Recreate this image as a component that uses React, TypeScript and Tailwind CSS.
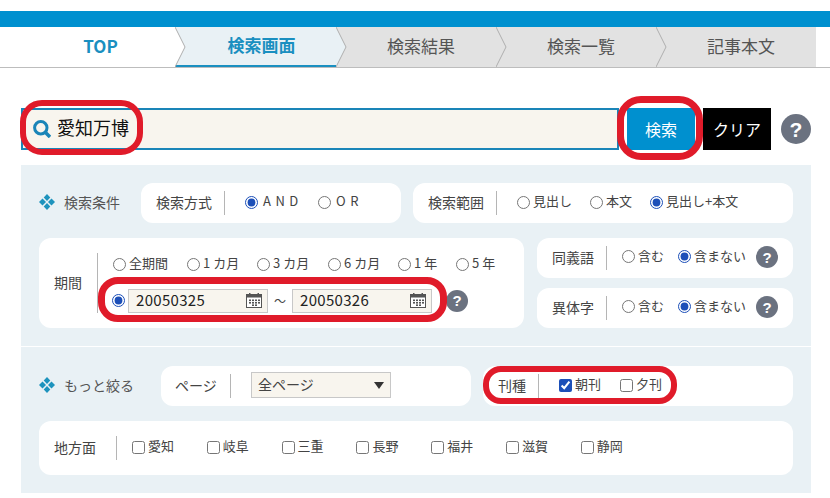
import React from "react";

const Help = ({ size = "w-[22px] h-[22px] text-[15px]" }: { size?: string }) => (
  <span className={`${size} rounded-full bg-[#6b7280] text-white font-bold flex items-center justify-center shrink-0 font-['Liberation_Sans',sans-serif] leading-none`}>?</span>
);

const Diamonds = () => (
  <svg width="16" height="16" viewBox="0 0 16 16" className="shrink-0 mb-[2px]">
    <g fill="#1d93bd">
      <polygon points="8,0 11.3,3.5 8,7 4.7,3.5" />
      <polygon points="8,9 11.3,12.5 8,16 4.7,12.5" />
      <polygon points="3.5,4.5 7,8 3.5,11.5 0,8" />
      <polygon points="12.5,4.5 16,8 12.5,11.5 9,8" />
    </g>
  </svg>
);

const Calendar = () => (
  <svg width="16" height="15" viewBox="0 0 16 15" className="shrink-0">
    <rect x="0.5" y="1.5" width="15" height="13" fill="#fff" stroke="#555" />
    <rect x="0.5" y="1.5" width="15" height="3" fill="#555" />
    <rect x="3" y="0" width="1.5" height="3" fill="#555" />
    <rect x="11.5" y="0" width="1.5" height="3" fill="#555" />
    <g fill="#555">
      <rect x="3" y="6.5" width="2" height="1.6" />
      <rect x="6" y="6.5" width="2" height="1.6" />
      <rect x="9" y="6.5" width="2" height="1.6" />
      <rect x="12" y="6.5" width="2" height="1.6" />
      <rect x="3" y="9" width="2" height="1.6" />
      <rect x="6" y="9" width="2" height="1.6" />
      <rect x="9" y="9" width="2" height="1.6" />
      <rect x="12" y="9" width="2" height="1.6" />
      <rect x="6" y="11.4" width="2" height="1.6" />
      <rect x="9" y="11.4" width="2" height="1.6" />
    </g>
  </svg>
);

const Arrow = ({ fill }: { fill: string }) => (
  <svg width="11" height="40" viewBox="0 0 11 40" className="absolute left-full top-0 z-10">
    <polygon points="0,0 10,20 0,40" fill={fill} />
    <polyline points="0,0 10,20 0,40" fill="none" stroke="#aeaeae" strokeWidth="1" />
  </svg>
);

const Tab = ({ w, label, cls, arrow }: { w: string; label: string; cls: string; arrow?: string }) => (
  <div className={`relative ${w} h-full flex items-center justify-center text-[17px] ${cls}`}>
    <span className="pb-[2px]">{label}</span>
    {arrow && <Arrow fill={arrow} />}
  </div>
);

const Radio = ({ label, checked, name, gap = "gap-[3px]", cls = "" }: { label: string; checked?: boolean; name: string; gap?: string; cls?: string }) => (
  <label className={`flex items-center ${gap} ${cls}`}>
    <input type="radio" name={name} defaultChecked={checked} className="w-[13px] h-[13px] m-0 accent-[#1c4fb8]" />
    <span className="pb-[2px]">{label}</span>
  </label>
);

const Check = ({ label, checked, cls = "" }: { label: string; checked?: boolean; cls?: string }) => (
  <label className={`flex items-center gap-[3px] ${cls}`}>
    <input type="checkbox" defaultChecked={checked} className="w-[13px] h-[13px] m-0 accent-[#1c4fb8]" />
    <span className="pb-[2px]">{label}</span>
  </label>
);

const Divider = ({ h = "h-[24px]" }: { h?: string }) => <span className={`w-px ${h} bg-[#b5b5b5] shrink-0`} />;

const DateBox = ({ v }: { v: string }) => (
  <div className="w-[140px] h-[24px] bg-[#f8f5ee] border border-[#c8c8c8] flex items-center justify-between pl-[7px] pr-[5px] text-[15px] tracking-[0.3px] text-[#222]">
    <span className="pb-[1px]">{v}</span>
    <Calendar />
  </div>
);

const Ring = ({ cls }: { cls: string }) => (
  <div className={`absolute border-[#e01b2a] pointer-events-none ${cls}`} />
);

export default function App() {
  return (
    <div className="relative w-[830px] h-[498px] overflow-hidden bg-white text-[#444] text-[14px] font-['Noto_Sans_CJK_JP','Noto_Sans',sans-serif]">
      <div className="h-[11px]" />
      <div className="h-[16px] bg-[#0090cf]" />
      <div className="flex h-[41px] border-b border-[#bdbdbd]">
        <Tab w="w-[175px]" label="TOP" cls="pl-[26px] font-bold text-[#1a8fc0] bg-white" arrow="#ffffff" />
        <Tab w="w-[161px]" label="検索画面" cls="pl-[12px] font-bold text-[#1a8fc0] bg-[#e9f1f5] border-b-2 border-[#1a8fc0] -mb-px h-[41px]" arrow="#e9f1f5" />
        <Tab w="w-[160px]" label="検索結果" cls="pl-[10px] text-[#555] bg-[#e2e2e2]" arrow="#e2e2e2" />
        <Tab w="w-[160px]" label="検索一覧" cls="pl-[10px] text-[#555] bg-[#e2e2e2]" arrow="#e2e2e2" />
        <Tab w="w-[160px]" label="記事本文" cls="pl-[10px] text-[#555] bg-[#e2e2e2]" />
      </div>

      <div className="flex items-center h-[42px] mt-[40px] ml-[21px]">
        <div className="w-[598px] h-full border-2 border-[#1a85b8] bg-[#f8f5ee] flex items-center pl-[10px] gap-[6px]">
          <svg width="18" height="18" viewBox="0 0 18 18" className="shrink-0">
            <circle cx="7.8" cy="7.8" r="6.2" fill="none" stroke="#1a85b8" strokeWidth="3" />
            <line x1="12.5" y1="12.5" x2="17" y2="17" stroke="#1a85b8" strokeWidth="3.5" />
          </svg>
          <span className="text-[18px] text-[#111] pb-[3px]">愛知万博</span>
        </div>
        <button className="w-[68px] h-full ml-[8px] bg-[#0090cf] text-white text-[16px]">検索</button>
        <button className="w-[68px] h-full ml-[8px] bg-black text-white text-[16px]">クリア</button>
        <span className="ml-[10px]"><Help size="w-[30px] h-[30px] text-[21px]" /></span>
      </div>

      <div className="w-[790px] ml-[21px] mt-[15px] bg-[#e9f1f5]">
        <div className="px-[18px] pt-[18px] pb-[18px] flex flex-col gap-[15px]">
          <div className="flex items-center">
            <Diamonds />
            <span className="ml-[9px] w-[77px] text-[#555] pb-[2px]">検索条件</span>
            <div className="w-[260px] h-[40px] bg-white rounded-[12px] flex items-center pl-[15px]">
              <span className="w-[68px] pb-[2px]">検索方式</span>
              <Divider />
              <div className="flex items-center gap-[19px] ml-[20px] text-[13px] tracking-[0.8px] pb-[2px]">
                <Radio name="m" label="A N D" checked gap="gap-[5px]" />
                <Radio name="m" label="O R" gap="gap-[5px]" />
              </div>
            </div>
            <div className="w-[380px] h-[40px] ml-[12px] bg-white rounded-[12px] flex items-center pl-[15px]">
              <span className="w-[68px] pb-[2px]">検索範囲</span>
              <Divider />
              <div className="flex items-center gap-[18px] ml-[20px] text-[13px] pb-[2px]">
                <Radio name="r" label="見出し" />
                <Radio name="r" label="本文" />
                <Radio name="r" label="見出し+本文" checked />
              </div>
            </div>
          </div>

          <div className="flex">
            <div className="w-[485px] h-[90px] bg-white rounded-[12px] flex items-center pl-[15px]">
              <span className="w-[43px] pb-[2px]">期間</span>
              <Divider h="h-[60px]" />
              <div className="ml-[15px] flex flex-col gap-[14px]">
                <div className="flex items-center text-[13px] -mb-[1px] pb-[2px]">
                  <Radio name="p" label="全期間" cls="w-[74px]" />
                  <Radio name="p" label="1 カ月" cls="w-[70px]" />
                  <Radio name="p" label="3 カ月" cls="w-[71px]" />
                  <Radio name="p" label="6 カ月" cls="w-[70px]" />
                  <Radio name="p" label="1 年" cls="w-[58px]" />
                  <Radio name="p" label="5 年" />
                </div>
                <div className="flex items-center -ml-px -mt-[1px]">
                  <input type="radio" name="p" defaultChecked className="w-[13px] h-[13px] m-0 accent-[#1c4fb8]" />
                  <span className="ml-[3px]"><DateBox v="20050325" /></span>
                  <span className="mx-[6px] text-[12px]">～</span>
                  <DateBox v="20050326" />
                  <span className="ml-[14px]"><Help /></span>
                </div>
              </div>
            </div>
            <div className="ml-[13px] w-[256px] flex flex-col gap-[10px]">
              {["同義語", "異体字"].map((t) => (
                <div key={t} className="h-[40px] bg-white rounded-[12px] flex items-center pl-[15px]">
                  <span className="w-[54px] pb-[2px]">{t}</span>
                  <Divider />
                  <div className="flex items-center gap-[14px] ml-[15px] text-[13px] pb-[3px]">
                    <Radio name={t} label="含む" />
                    <Radio name={t} label="含まない" checked />
                  </div>
                  <span className="ml-[10px] mb-[2px]"><Help /></span>
                </div>
              ))}
            </div>
          </div>
        </div>

        <div className="h-px bg-white" />

        <div className="px-[18px] pt-[19px] pb-[18px] flex flex-col gap-[15px]">
          <div className="flex items-center">
            <Diamonds />
            <span className="ml-[9px] w-[97px] text-[#555] pb-[2px]">もっと絞る</span>
            <div className="w-[310px] h-[40px] bg-white rounded-[12px] flex items-center pl-[14px]">
              <span className="w-[55px] pb-[2px]">ページ</span>
              <Divider />
              <div className="ml-[20px] mb-[2px] w-[140px] h-[26px] bg-[#f8f5ee] border border-[#c8c8c8] flex items-center justify-between pl-[6px] pr-[6px]">
                <span className="pb-[1px]">全ページ</span>
                <svg width="10" height="7" viewBox="0 0 10 7"><polygon points="0,0 10,0 5,7" fill="#333" /></svg>
              </div>
            </div>
            <div className="w-[310px] h-[40px] ml-[12px] bg-white rounded-[12px] flex items-center pl-[15px]">
              <span className="w-[40px] pb-[2px]">刊種</span>
              <Divider />
              <div className="flex items-center gap-[19px] ml-[20px] text-[13px] pb-[2px]">
                <Check label="朝刊" checked />
                <Check label="夕刊" />
              </div>
            </div>
          </div>
          <div className="h-[54px] bg-white rounded-[12px] flex items-center pl-[15px]">
            <span className="w-[62px] pb-[2px]">地方面</span>
            <Divider />
            <div className="flex items-center ml-[15px] text-[13px] pb-[2px]">
              {["愛知", "岐阜", "三重", "長野", "福井", "滋賀", "静岡"].map((t) => (
                <Check key={t} label={t} cls="w-[74.8px]" />
              ))}
            </div>
          </div>
        </div>
      </div>

      <Ring cls="left-[20px] top-[100px] w-[123px] h-[55px] rounded-[22px] border-[6px]" />
      <Ring cls="left-[617px] top-[96px] w-[86px] h-[64px] rounded-[24px] border-[7px]" />
      <Ring cls="left-[98px] top-[277px] w-[349px] h-[45px] rounded-[20px] border-[7px]" />
      <Ring cls="left-[483px] top-[366px] w-[194px] h-[38px] rounded-[18px] border-[6px]" />
    </div>
  );
}
